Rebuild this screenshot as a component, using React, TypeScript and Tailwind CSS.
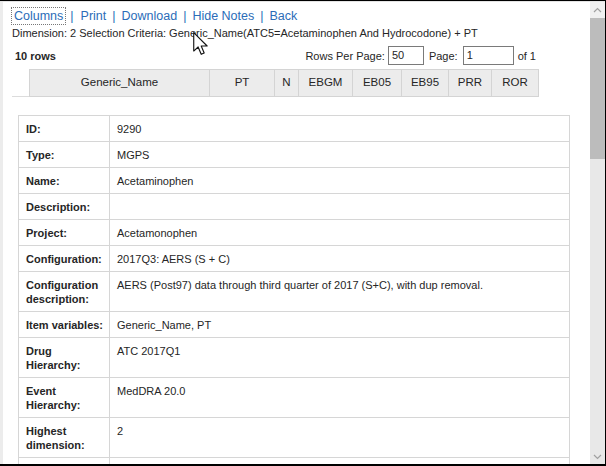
import React from "react";

const rows: [string, string][] = [
  ["ID:", "9290"],
  ["Type:", "MGPS"],
  ["Name:", "Acetaminophen"],
  ["Description:", ""],
  ["Project:", "Acetamonophen"],
  ["Configuration:", "2017Q3: AERS (S + C)"],
  ["Configuration description:", "AERS (Post97) data through third quarter of 2017 (S+C), with dup removal."],
  ["Item variables:", "Generic_Name, PT"],
  ["Drug Hierarchy:", "ATC 2017Q1"],
  ["Event Hierarchy:", "MedDRA 20.0"],
  ["Highest dimension:", "2"],
  ["", ""],
];

const cols: [string, string][] = [
  ["Generic_Name", "w-[180px]"],
  ["PT", "w-[65px]"],
  ["N", "w-[24px]"],
  ["EBGM", "w-[54px]"],
  ["EB05", "w-[49px]"],
  ["EB95", "w-[47px]"],
  ["PRR", "w-[43px]"],
  ["ROR", "w-[46px]"],
];

function Cursor() {
  return (
    <svg className="absolute left-[193px] top-[32px]" width="17" height="24" viewBox="0 0 12 17">
      <path
        d="M0.5 0.5 L0.5 13.5 L3.6 10.6 L5.8 15.8 L7.9 14.9 L5.8 9.9 L10 9.9 Z"
        fill="#ffffff"
        stroke="#111111"
        strokeWidth="0.8"
        strokeLinejoin="round"
      />
    </svg>
  );
}

export default function App() {
  const link = "text-[#2b6cb8]";
  return (
    <div
      className="relative w-[606px] h-[466px] overflow-hidden bg-black pt-[1px] pr-[1px] pb-[2px] flex"
      style={{ fontFamily: '"Liberation Sans", Arial, sans-serif' }}
    >
      <div className="flex-1 flex bg-white border-t border-[#e4e4e4]">
        <div className="flex-1 overflow-hidden border-l-[3px] border-[#ececec] pl-[9px] text-[#262626]">
          {/* links */}
          <div className="mt-[6px] flex items-center h-[16px] text-[12.5px] leading-[16px]">
            <span className={`${link} px-[2px] outline outline-1 outline-dotted outline-[#777]`}>Columns</span>
            <span className={`${link} ml-[5px] mr-[7px]`}>|</span>
            <span className={link}>Print</span>
            <span className={`${link} ml-[6px] mr-[6px]`}>|</span>
            <span className={link}>Download</span>
            <span className={`${link} ml-[6px] mr-[6px]`}>|</span>
            <span className={link}>Hide Notes</span>
            <span className={`${link} ml-[6px] mr-[6px]`}>|</span>
            <span className={link}>Back</span>
          </div>
          {/* dimension */}
          <div className="mt-[2px] text-[11px] leading-[14px] whitespace-nowrap">
            Dimension: 2 Selection Criteria: Generic_Name(ATC5=Acetaminophen And Hydrocodone) + PT
          </div>
          {/* toolbar */}
          <div className="mt-[6px] w-[525px] h-[19px] flex items-center justify-between text-[11px] leading-[14px]">
            <span className="pl-[3px] font-bold">10 rows</span>
            <div className="flex items-center">
              <span>Rows Per Page:</span>
              <div className="ml-[3px] w-[36px] h-[19px] border border-[#7a7a7a] pl-[3px] leading-[17px]">50</div>
              <span className="ml-[5px]">Page:</span>
              <div className="ml-[5px] w-[51px] h-[19px] border border-[#7a7a7a] pl-[3px] leading-[17px]">1</div>
              <span className="ml-[4px] mr-[1px]">of 1</span>
            </div>
          </div>
          {/* grid header */}
          <div className="mt-[4px] flex h-[28px] text-[11.5px]">
            <div className="w-[17px] border-b border-[#dcdcdc]" />
            <div className="flex border border-[#d4d4d4] bg-[#ececec]">
              {cols.map(([c, w], i) => (
                <div
                  key={c}
                  className={`${w} flex items-center justify-center ${i < cols.length - 1 ? "border-r border-[#d4d4d4]" : ""}`}
                >
                  {c}
                </div>
              ))}
            </div>
          </div>
          {/* details */}
          <table className="mt-[18px] ml-[6px] w-[552px] table-fixed border-collapse text-[11px] leading-[14px]">
            <tbody>
              {rows.map(([k, v], i) => (
                <tr key={i}>
                  <td className="w-[91px] border border-[#d6d6d6] pl-[7px] pr-[5px] pt-[6px] pb-[5px] align-top font-bold">
                    {k}
                  </td>
                  <td className="border border-[#d6d6d6] pl-[7px] pr-[5px] pt-[6px] pb-[5px] align-top">{v}</td>
                </tr>
              ))}
            </tbody>
          </table>
        </div>
        {/* scrollbar */}
        <div className="w-[15px] flex flex-col bg-[#e8e8e8]">
          <div className="h-[16px] bg-[#f0f0f0] flex items-center justify-center">
            <svg width="9" height="6" viewBox="0 0 9 6">
              <path d="M1 5 L4.5 1.5 L8 5" fill="none" stroke="#a0a0a0" strokeWidth="1.2" />
            </svg>
          </div>
          <div className="h-[141px] bg-[#bcbcbc]" />
          <div className="flex-1" />
          <div className="h-[15px] flex items-center justify-center">
            <svg width="9" height="6" viewBox="0 0 9 6">
              <path d="M1 1 L4.5 4.5 L8 1" fill="none" stroke="#a0a0a0" strokeWidth="1.2" />
            </svg>
          </div>
        </div>
      </div>
      <Cursor />
    </div>
  );
}
